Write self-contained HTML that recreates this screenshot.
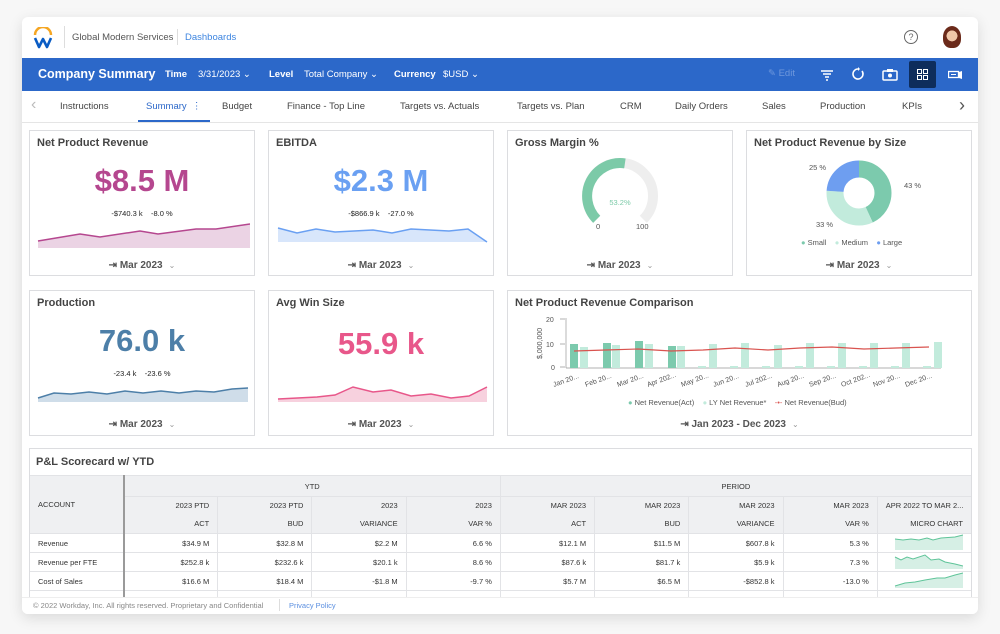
<!DOCTYPE html>
<html><head><meta charset="utf-8"><style>
*{box-sizing:border-box;margin:0;padding:0}
body{width:1000px;height:634px;background:#f7f7f7;font-family:"Liberation Sans",sans-serif;position:relative;overflow:hidden;color:#333}
.abs{position:absolute}
.frame{left:22px;top:17px;width:956px;height:597px;background:#fff;border-radius:6px;box-shadow:0 4px 14px rgba(0,0,0,.12);overflow:hidden}
.card{position:absolute;background:#fff;border:1px solid #dcdde0}
.card h3{position:absolute;left:7px;top:6px;font-size:11px;font-weight:bold;color:#444}
.big{position:absolute;width:100%;text-align:center;font-size:31px;font-weight:bold}
.sub{position:absolute;width:100%;text-align:center;font-size:7.5px;color:#222}
.date{position:absolute;width:100%;text-align:center;font-size:10px;color:#555;font-weight:bold}
.date i{font-style:normal;font-weight:normal;color:#999;font-size:8px;margin-left:6px}
.tab{position:absolute;font-size:9.5px;color:#444}
.hd{font-size:9.5px;color:#fff}
table{border-collapse:collapse;font-size:7.5px;color:#333;table-layout:fixed}
td{border:1px solid #e2e3e6;height:19px;padding:0 8px;text-align:right;white-space:nowrap;overflow:hidden}
td.a{text-align:left;border-right:2px solid #9a9a9a}
td.c{text-align:center}
tr.h2 td{height:36px;line-height:18px;text-align:right}
</style></head><body>
<div class="abs frame">
 <svg class="abs" style="left:10px;top:10px" width="22" height="22" viewBox="0 0 22 22"><path d="M3 8 A8 8 0 0 1 19 8" stroke="#f5a623" stroke-width="2.5" fill="none"/><path d="M3 11 L7 20 L11 12 L15 20 L19 11" stroke="#0a5cc4" stroke-width="2.6" fill="none" stroke-linejoin="round"/></svg>
 <div class="abs" style="left:42px;top:9px;width:1px;height:22px;background:#ddd"></div>
 <div class="abs" style="left:50px;top:15px;font-size:9.5px;color:#555">Global Modern Services</div>
 <div class="abs" style="left:155px;top:12px;width:1px;height:16px;background:#ddd"></div>
 <div class="abs" style="left:163px;top:15px;font-size:9.5px;color:#3d85e0">Dashboards</div>
 <div class="abs" style="left:882px;top:13px;width:14px;height:14px;border:1.3px solid #666;border-radius:50%;font-size:9px;text-align:center;line-height:12px;color:#666">?</div>
 <div class="abs" style="left:921px;top:9px;width:18px;height:22px;border-radius:50% 50% 40% 40%;background:radial-gradient(circle at 50% 45%,#f0c7a8 0 35%,#6b2a1a 37%);"></div>
 <div class="abs" style="left:0;top:41px;width:956px;height:33px;background:#2c68c9"></div>
 <div class="abs hd" style="left:16px;top:50px;font-size:12.5px;font-weight:bold">Company Summary</div>
 <div class="abs hd" style="left:143px;top:52px;font-weight:bold">Time</div>
 <div class="abs hd" style="left:176px;top:52px">3/31/2023 ⌄</div>
 <div class="abs hd" style="left:247px;top:52px;font-weight:bold">Level</div>
 <div class="abs hd" style="left:282px;top:52px">Total Company ⌄</div>
 <div class="abs hd" style="left:372px;top:52px;font-weight:bold">Currency</div>
 <div class="abs hd" style="left:421px;top:52px">$USD ⌄</div>
 <div class="abs" style="left:746px;top:51px;font-size:9.5px;color:#6f98dc">✎ Edit</div>
 <svg class="abs" style="left:798px;top:52px" width="14" height="12"><path d="M1 2H13M3 5H11M5 8H9M6 11H8" stroke="#fff" stroke-width="1.6"/></svg>
 <svg class="abs" style="left:829px;top:50px" width="14" height="14"><path d="M7 2A5 5 0 1 0 11 4" stroke="#fff" stroke-width="1.6" fill="none"/><path d="M7 0L9 2L7 4" fill="#fff"/></svg>
 <svg class="abs" style="left:860px;top:51px" width="16" height="13"><rect x="1" y="3" width="14" height="9" rx="1" fill="none" stroke="#fff" stroke-width="1.5"/><rect x="5" y="1" width="6" height="3" fill="#fff"/><circle cx="8" cy="7.5" r="2" fill="#fff"/></svg>
 <div class="abs" style="left:887px;top:44px;width:27px;height:27px;background:#0e2d5c;border-radius:2px"></div>
 <svg class="abs" style="left:895px;top:52px" width="11" height="11"><rect x="0.5" y="0.5" width="4" height="4" fill="none" stroke="#fff"/><rect x="6.5" y="0.5" width="4" height="4" fill="none" stroke="#fff"/><rect x="0.5" y="6.5" width="4" height="4" fill="none" stroke="#fff"/><rect x="6.5" y="6.5" width="4" height="4" fill="none" stroke="#fff"/></svg>
 <svg class="abs" style="left:926px;top:53px" width="14" height="9"><rect x="0.5" y="1.5" width="10" height="6" fill="none" stroke="#fff" stroke-width="1.3"/><path d="M3 4.5H8" stroke="#fff"/><path d="M11 2V8L14 9V1Z" fill="#fff"/></svg>
 <div class="abs" style="left:0;top:74px;width:956px;height:32px;border-bottom:1px solid #e5e5e5"></div>
 <div class="abs" style="left:9px;top:79px;font-size:16px;color:#bbb">‹</div>
 <div class="tab" style="left:38px;top:84px">Instructions</div>
 <div class="tab" style="left:124px;top:84px;color:#2c68c9">Summary &nbsp;⋮</div>
 <div class="abs" style="left:116px;top:103px;width:72px;height:2px;background:#2c68c9"></div>
 <div class="tab" style="left:200px;top:84px">Budget</div>
 <div class="tab" style="left:265px;top:84px">Finance - Top Line</div>
 <div class="tab" style="left:378px;top:84px">Targets vs. Actuals</div>
 <div class="tab" style="left:495px;top:84px">Targets vs. Plan</div>
 <div class="tab" style="left:598px;top:84px">CRM</div>
 <div class="tab" style="left:653px;top:84px">Daily Orders</div>
 <div class="tab" style="left:740px;top:84px">Sales</div>
 <div class="tab" style="left:798px;top:84px">Production</div>
 <div class="tab" style="left:880px;top:84px">KPIs</div>
 <div class="abs" style="left:937px;top:78px;font-size:18px;color:#555">›</div>
</div>

<div class="card" style="left:29px;top:130px;width:226px;height:146px"><h3>Net Product Revenue</h3>
 <div class="big" style="top:32px;color:#b5478f">$8.5 M</div>
 <div class="sub" style="top:78px">-$740.3 k &nbsp;&nbsp; -8.0 %</div>
 <svg class="abs" style="left:6px;top:92px" width="214" height="25"><path d="M2 18L44 11L64 14L104 8L122 11L160 6L180 6L214 1V25H2Z" fill="#ebd3e4"/><path d="M2 18L44 11L64 14L104 8L122 11L160 6L180 6L214 1" stroke="#b5478f" stroke-width="1.5" fill="none"/></svg>
 <div class="date" style="top:129px">⇥ Mar 2023<i>⌄</i></div></div>
<div class="card" style="left:268px;top:130px;width:226px;height:146px"><h3>EBITDA</h3>
 <div class="big" style="top:32px;color:#6aa0f2">$2.3 M</div>
 <div class="sub" style="top:78px">-$866.9 k &nbsp;&nbsp; -27.0 %</div>
 <svg class="abs" style="left:8px;top:92px" width="212" height="25"><path d="M1 5L20 10L39 6L58 9L96 7L115 10L134 6L172 8L191 6L210 19L1 19Z" fill="#d8e6fb"/><path d="M1 5L20 10L39 6L58 9L96 7L115 10L134 6L172 8L191 6L210 19" stroke="#6aa0f2" stroke-width="1.5" fill="none"/></svg>
 <div class="date" style="top:129px">⇥ Mar 2023<i>⌄</i></div></div>
<div class="card" style="left:507px;top:130px;width:226px;height:146px"><h3>Gross Margin %</h3>
 <svg class="abs" style="left:72px;top:27px" width="82" height="75"><path d="M16.7 61.3A33 33 0 1 1 63.3 61.3" stroke="#eeeeee" stroke-width="10" fill="none"/><path d="M16.7 61.3A33 33 0 0 1 44.9 5.4" stroke="#7ccaa8" stroke-width="10" fill="none"/></svg>
 <div class="abs" style="left:0;width:100%;text-align:center;top:67px;font-size:7.5px;color:#7ccaa8">53.2%</div>
 <div class="abs" style="left:88px;top:91px;font-size:7.5px;color:#555">0</div>
 <div class="abs" style="left:128px;top:91px;font-size:7.5px;color:#555">100</div>
 <div class="date" style="top:129px">⇥ Mar 2023<i>⌄</i></div></div>
<div class="card" style="left:746px;top:130px;width:226px;height:146px"><h3>Net Product Revenue by Size</h3>
 <svg class="abs" style="left:79px;top:29px" width="66" height="66" viewBox="-33 -33 66 66"><circle r="24" fill="none" stroke="#7ccaad" stroke-width="17" stroke-dasharray="64.8 150.8" transform="rotate(-90)"/><circle r="24" fill="none" stroke="#c2ebdc" stroke-width="17" stroke-dasharray="0 64.8 49.8 150.8" transform="rotate(-90)"/><circle r="24" fill="none" stroke="#6e9ef0" stroke-width="17" stroke-dasharray="0 114.6 37.7 150.8" transform="rotate(-90)"/></svg>
 <div class="abs" style="left:62px;top:32px;font-size:7.5px;color:#555">25 %</div>
 <div class="abs" style="left:157px;top:50px;font-size:7.5px;color:#555">43 %</div>
 <div class="abs" style="left:69px;top:89px;font-size:7.5px;color:#555">33 %</div>
 <div class="abs" style="left:54px;top:107px;font-size:7.5px;color:#555"><span style="color:#7ccaad">●</span> Small &nbsp;&nbsp; <span style="color:#c2ebdc">●</span> Medium &nbsp;&nbsp; <span style="color:#6e9ef0">●</span> Large</div>
 <div class="date" style="top:129px">⇥ Mar 2023<i>⌄</i></div></div>

<div class="card" style="left:29px;top:290px;width:226px;height:146px"><h3>Production</h3>
 <div class="big" style="top:32px;color:#4d7fa8">76.0 k</div>
 <div class="sub" style="top:78px">-23.4 k &nbsp;&nbsp; -23.6 %</div>
 <svg class="abs" style="left:7px;top:92px" width="212" height="20"><path d="M1 15L17 10L34 11L52 9L70 11L88 8L106 10L124 8L142 10L159 8L177 9L195 6L211 5V19H1Z" fill="#cfdde9"/><path d="M1 15L17 10L34 11L52 9L70 11L88 8L106 10L124 8L142 10L159 8L177 9L195 6L211 5" stroke="#4d7fa8" stroke-width="1.5" fill="none"/></svg>
 <div class="date" style="top:128px">⇥ Mar 2023<i>⌄</i></div></div>
<div class="card" style="left:268px;top:290px;width:226px;height:146px"><h3>Avg Win Size</h3>
 <div class="big" style="top:35px;color:#e8578a">55.9 k</div>
 <svg class="abs" style="left:8px;top:92px" width="212" height="20"><path d="M1 16L40 14L58 12L76 4L96 9L114 7L134 13L154 11L174 15L192 13L210 4V19H1Z" fill="#f7d1de"/><path d="M1 16L40 14L58 12L76 4L96 9L114 7L134 13L154 11L174 15L192 13L210 4" stroke="#e8578a" stroke-width="1.5" fill="none"/></svg>
 <div class="date" style="top:128px">⇥ Mar 2023<i>⌄</i></div></div>
<div class="card" style="left:507px;top:290px;width:465px;height:146px"><h3>Net Product Revenue Comparison</h3>
 <svg class="abs" style="left:0;top:18px" width="465" height="90" font-family="Liberation Sans" font-size="7" fill="#555">
  <text x="38" y="13">20</text><text x="38" y="38">10</text><text x="43" y="61">0</text>
  <text transform="translate(34,50) rotate(-90)">$,000,000</text>
  <path d="M52 10H57M52 35H57M52 58H57M58 9V59M58 59H433" stroke="#999" stroke-width=".7"/>
  <g fill="#7ccaad"><rect x="62" y="35" width="8" height="24"/><rect x="95" y="34" width="8" height="25"/><rect x="127" y="32" width="8" height="27"/><rect x="160" y="37" width="8" height="22"/></g>
  <g fill="#c2ebdc"><rect x="72" y="38" width="8" height="21"/><rect x="104" y="36" width="8" height="23"/><rect x="137" y="35" width="8" height="24"/><rect x="169" y="37" width="8" height="22"/><rect x="201" y="35" width="8" height="24"/><rect x="233" y="34" width="8" height="25"/><rect x="266" y="36" width="8" height="23"/><rect x="298" y="34" width="8" height="25"/><rect x="330" y="34" width="8" height="25"/><rect x="362" y="34" width="8" height="25"/><rect x="394" y="34" width="8" height="25"/><rect x="426" y="33" width="8" height="26"/>
  <rect x="190" y="57" width="8" height="2"/><rect x="222" y="57" width="8" height="2"/><rect x="254" y="57" width="8" height="2"/><rect x="287" y="57" width="8" height="2"/><rect x="319" y="57" width="8" height="2"/><rect x="351" y="57" width="8" height="2"/><rect x="383" y="57" width="8" height="2"/><rect x="415" y="57" width="8" height="2"/></g>
  <path d="M66 42L98 41L130 40L163 42L195 41L227 39L260 41L292 39L324 38L356 40L388 39L421 38" stroke="#d9534f" stroke-width="1.2" fill="none"/>
  <g font-size="7"><text transform="translate(46,78) rotate(-20)">Jan 20...</text><text transform="translate(78,78) rotate(-20)">Feb 20...</text><text transform="translate(110,78) rotate(-20)">Mar 20...</text><text transform="translate(140,78) rotate(-20)">Apr 202...</text><text transform="translate(174,78) rotate(-20)">May 20...</text><text transform="translate(206,78) rotate(-20)">Jun 20...</text><text transform="translate(238,78) rotate(-20)">Jul 202...</text><text transform="translate(270,78) rotate(-20)">Aug 20...</text><text transform="translate(302,78) rotate(-20)">Sep 20...</text><text transform="translate(334,78) rotate(-20)">Oct 202...</text><text transform="translate(366,78) rotate(-20)">Nov 20...</text><text transform="translate(398,78) rotate(-20)">Dec 20...</text></g>
 </svg>
 <div class="abs" style="left:120px;top:107px;font-size:7.5px;color:#555"><span style="color:#7ccaad">●</span> Net Revenue(Act) &nbsp;&nbsp; <span style="color:#c2ebdc">●</span> LY Net Revenue* &nbsp;&nbsp; <span style="color:#d9534f">-•-</span> Net Revenue(Bud)</div>
 <div class="date" style="top:128px">⇥ Jan 2023 - Dec 2023<i>⌄</i></div></div>

<div class="card" style="left:29px;top:448px;width:943px;height:160px;overflow:hidden"><h3 style="left:6px;top:7px">P&amp;L Scorecard w/ YTD</h3>
 <table class="abs" style="left:-1px;top:26px;width:943px">
  <colgroup><col style="width:94px"><col><col><col><col><col><col><col><col><col></colgroup>
  <tr style="background:#eff0f2"><td rowspan="2" class="a" style="vertical-align:middle">ACCOUNT</td><td colspan="4" class="c" style="height:21px">YTD</td><td colspan="5" class="c">PERIOD</td></tr>
  <tr class="h2" style="background:#eff0f2"><td>2023 PTD<br>ACT</td><td>2023 PTD<br>BUD</td><td>2023<br>VARIANCE</td><td>2023<br>VAR %</td><td>MAR 2023<br>ACT</td><td>MAR 2023<br>BUD</td><td>MAR 2023<br>VARIANCE</td><td>MAR 2023<br>VAR %</td><td>APR 2022 TO MAR 2...<br>MICRO CHART</td></tr>
  <tr><td class="a">Revenue</td><td>$34.9 M</td><td>$32.8 M</td><td>$2.2 M</td><td>6.6 %</td><td>$12.1 M</td><td>$11.5 M</td><td>$607.8 k</td><td>5.3 %</td><td><svg width="70" height="16"><path d="M2 5L10 6L18 5L26 6L34 4L40 6L48 4L62 3L70 1V16H2Z" fill="#d6efe5"/><path d="M2 5L10 6L18 5L26 6L34 4L40 6L48 4L62 3L70 1" stroke="#5fc499" fill="none"/></svg></td></tr>
  <tr><td class="a">Revenue per FTE</td><td>$252.8 k</td><td>$232.6 k</td><td>$20.1 k</td><td>8.6 %</td><td>$87.6 k</td><td>$81.7 k</td><td>$5.9 k</td><td>7.3 %</td><td><svg width="70" height="16"><path d="M2 4L8 7L14 4L20 6L32 2L38 7L46 6L52 9L62 11L70 13V16H2Z" fill="#d6efe5"/><path d="M2 4L8 7L14 4L20 6L32 2L38 7L46 6L52 9L62 11L70 13" stroke="#5fc499" fill="none"/></svg></td></tr>
  <tr><td class="a">Cost of Sales</td><td>$16.6 M</td><td>$18.4 M</td><td>-$1.8 M</td><td>-9.7 %</td><td>$5.7 M</td><td>$6.5 M</td><td>-$852.8 k</td><td>-13.0 %</td><td><svg width="70" height="16"><path d="M2 14L12 11L22 10L32 8L44 6L52 6L62 3L70 1V16H2Z" fill="#d6efe5"/><path d="M2 14L12 11L22 10L32 8L44 6L52 6L62 3L70 1" stroke="#5fc499" fill="none"/></svg></td></tr>
  <tr><td class="a">Gross Margin</td><td>$18.3 M</td><td>$14.4 M</td><td>$4.0 M</td><td>27.5 %</td><td>$6.4 M</td><td>$5.0 M</td><td>$1.5 M</td><td>29.4 %</td><td></td></tr>
 </table>
</div>
<div class="abs" style="left:22px;top:597px;width:956px;height:17px;background:#fff;border-top:1px solid #eee;border-radius:0 0 6px 6px"></div>
<div class="abs" style="left:33px;top:601px;font-size:7.5px;color:#888">© 2022 Workday, Inc. All rights reserved. Proprietary and Confidential</div>
<div class="abs" style="left:279px;top:599px;width:1px;height:12px;background:#ddd"></div>
<div class="abs" style="left:289px;top:601px;font-size:7.5px;color:#5b8fe0">Privacy Policy</div>
</body></html>
